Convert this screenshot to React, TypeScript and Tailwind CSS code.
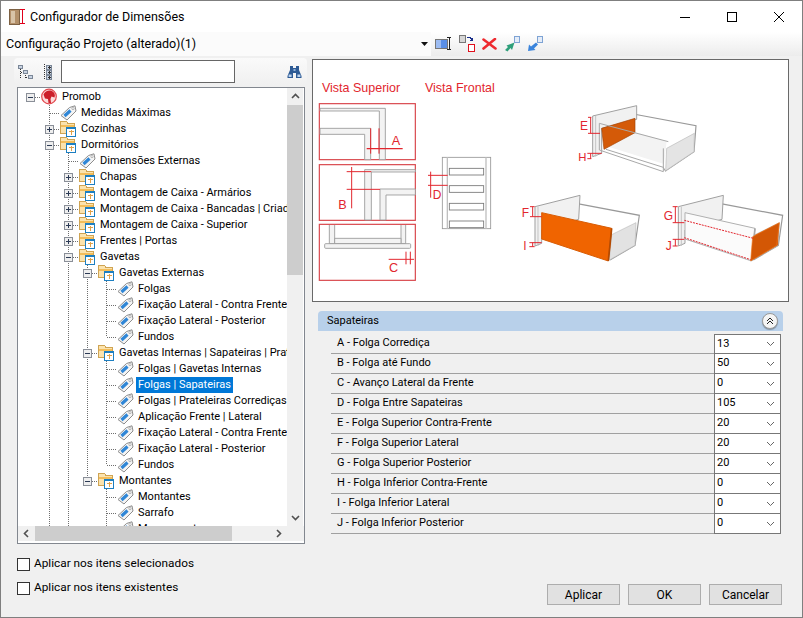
import { ReactNode } from "react";

type Kind = "minus" | "plus" | "leaf";
type Ico = "promob" | "tag" | "folder";
type TreeRow = { d: number; kind: Kind; icon: Ico; label: string; end?: boolean; selected?: boolean; noCol3?: boolean };

const TREE: TreeRow[] = [
  { d: 0, kind: "minus", icon: "promob", label: "Promob" },
  { d: 1, kind: "leaf", icon: "tag", label: "Medidas Máximas" },
  { d: 1, kind: "plus", icon: "folder", label: "Cozinhas" },
  { d: 1, kind: "minus", icon: "folder", label: "Dormitórios" },
  { d: 2, kind: "leaf", icon: "tag", label: "Dimensões Externas" },
  { d: 2, kind: "plus", icon: "folder", label: "Chapas" },
  { d: 2, kind: "plus", icon: "folder", label: "Montagem de Caixa - Armários" },
  { d: 2, kind: "plus", icon: "folder", label: "Montagem de Caixa - Bancadas | Criados" },
  { d: 2, kind: "plus", icon: "folder", label: "Montagem de Caixa - Superior" },
  { d: 2, kind: "plus", icon: "folder", label: "Frentes | Portas" },
  { d: 2, kind: "minus", icon: "folder", label: "Gavetas" },
  { d: 3, kind: "minus", icon: "folder", label: "Gavetas Externas" },
  { d: 4, kind: "leaf", icon: "tag", label: "Folgas" },
  { d: 4, kind: "leaf", icon: "tag", label: "Fixação Lateral - Contra Frente" },
  { d: 4, kind: "leaf", icon: "tag", label: "Fixação Lateral - Posterior" },
  { d: 4, kind: "leaf", icon: "tag", label: "Fundos", end: true },
  { d: 3, kind: "minus", icon: "folder", label: "Gavetas Internas | Sapateiras | Prateleiras Corrediças" },
  { d: 4, kind: "leaf", icon: "tag", label: "Folgas | Gavetas Internas" },
  { d: 4, kind: "leaf", icon: "tag", label: "Folgas | Sapateiras", selected: true },
  { d: 4, kind: "leaf", icon: "tag", label: "Folgas | Prateleiras Corrediças" },
  { d: 4, kind: "leaf", icon: "tag", label: "Aplicação Frente | Lateral" },
  { d: 4, kind: "leaf", icon: "tag", label: "Fixação Lateral - Contra Frente" },
  { d: 4, kind: "leaf", icon: "tag", label: "Fixação Lateral - Posterior" },
  { d: 4, kind: "leaf", icon: "tag", label: "Fundos", end: true },
  { d: 3, kind: "minus", icon: "folder", label: "Montantes", end: true },
  { d: 4, kind: "leaf", icon: "tag", label: "Montantes", noCol3: true },
  { d: 4, kind: "leaf", icon: "tag", label: "Sarrafo", noCol3: true },
  { d: 4, kind: "leaf", icon: "tag", label: "Mancamento", noCol3: true },
];

const PROPS = [
  ["A - Folga Corrediça", "13"],
  ["B - Folga até Fundo", "50"],
  ["C - Avanço Lateral da Frente", "0"],
  ["D - Folga Entre Sapateiras", "105"],
  ["E - Folga Superior Contra-Frente", "20"],
  ["F - Folga Superior Lateral", "20"],
  ["G - Folga Superior Posterior", "20"],
  ["H - Folga Inferior Contra-Frente", "0"],
  ["I - Folga Inferior Lateral", "0"],
  ["J - Folga Inferior Posterior", "0"],
];

const DOT = "#6f6f6f";

function Guide({ kind, line, first, end }: { kind?: Kind; line?: boolean; first?: boolean; end?: boolean }) {
  return (
    <svg width="19" height="16" className="shrink-0" shapeRendering="crispEdges">
      {line && <line x1="9.5" y1="0" x2="9.5" y2="16" stroke={DOT} strokeDasharray="1 1" />}
      {kind && !first && <line x1="9.5" y1="0" x2="9.5" y2={end ? 8 : 16} stroke={DOT} strokeDasharray="1 1" />}
      {kind && <line x1="10" y1="8.5" x2="19" y2="8.5" stroke={DOT} strokeDasharray="1 1" />}
      {kind && kind !== "leaf" && (
        <g>
          <rect x="5.5" y="4.5" width="8" height="8" fill="#eeeeee" stroke="#8a8f98" />
          <line x1="7" y1="8.5" x2="12" y2="8.5" stroke="#2b3a55" />
          {kind === "plus" && <line x1="9.5" y1="6" x2="9.5" y2="11" stroke="#2b3a55" />}
        </g>
      )}
    </svg>
  );
}

function RowIcon({ icon }: { icon: Ico }) {
  if (icon === "promob") {
    return (
      <svg width="20" height="18" className="shrink-0 -my-px overflow-visible">
        <circle cx="9" cy="8.5" r="7.3" fill="#fbdcdc" stroke="#e2484e" strokeWidth="1.2" />
        <path d="M3.5 6.5 C5 3 8.5 2 11.5 2.8 C14.5 4 15.5 7 14.5 9.5 L11.5 8.5 L10.5 11 L11 15 L8.5 15 L8 11 L5 10.5 Z" fill="#cc1f2a" />
      </svg>
    );
  }
  if (icon === "tag") {
    return (
      <svg width="20" height="16" className="shrink-0 overflow-visible">
        <path d="M2 10.5 L10.5 2.5 L16 0.8 L17 6 L8 15 Z" fill="#f4f4f4" stroke="#8d8d8d" strokeLinejoin="round" />
        <line x1="5.5" y1="11" x2="11.5" y2="5.5" stroke="#2f86d6" strokeWidth="3.2" />
        <circle cx="14" cy="3.6" r="1.1" fill="#fff" stroke="#999" strokeWidth="0.7" />
      </svg>
    );
  }
  return (
    <svg width="20" height="16" className="shrink-0 overflow-visible" shapeRendering="crispEdges">
      <path d="M1.5 0.5 H7.5 L9 2.5 H15.5 V12.5 H1.5 Z" fill="#fbe3ae" stroke="#cfa453" />
      <rect x="2" y="4" width="13" height="2" fill="#f3bd5a" />
      <rect x="7.5" y="6.5" width="9" height="9" fill="#fff" stroke="#1d7fc1" />
      <rect x="8" y="7" width="8" height="1" fill="#1d7fc1" />
      <path d="M10 10.5 H14.5 M12.5 9 V14" stroke="#e0a24a" />
    </svg>
  );
}

function Row({ row }: { row: TreeRow }) {
  const cols: ReactNode[] = [];
  for (let c = 0; c < row.d; c++) {
    const line = c === 1 || c === 2 || (c === 3 && !row.noCol3);
    cols.push(<Guide key={c} line={line} />);
  }
  return (
    <div className="flex h-4 shrink-0 items-center pl-[3px] whitespace-nowrap">
      {cols}
      <Guide kind={row.kind} first={row.d === 0} end={row.end} />
      <RowIcon icon={row.icon} />
      <span className={`h-4 px-[2px] leading-4 ${row.selected ? "bg-[#0078d7] text-white" : "text-black"}`}>{row.label}</span>
    </div>
  );
}

function TreeToolIcons() {
  return (
    <div className="flex items-center">
      <svg width="16" height="16" className="ml-[3px]" shapeRendering="crispEdges">
        <path d="M3.5 5 V15 M8.5 11 V15 M4 8.5 H6 M9 13.5 H11" stroke="#333" strokeDasharray="1 1" />
        <rect x="1.5" y="1.5" width="4" height="3" fill="#c9d3e2" stroke="#7b8797" />
        <rect x="6.5" y="6.5" width="4" height="3" fill="#c9d3e2" stroke="#7b8797" />
        <rect x="11.5" y="11.5" width="4" height="3" fill="#c9d3e2" stroke="#7b8797" />
      </svg>
      <svg width="12" height="16" className="ml-[10px]" shapeRendering="crispEdges">
        <line x1="1.5" y1="0" x2="1.5" y2="16" stroke="#333" strokeDasharray="1 1" />
        {[1, 6, 11].map((y) => (
          <g key={y}>
            <rect x="3.5" y={y + 0.5} width="5" height="4" fill="#c9d3e2" stroke="#7b8797" />
            <path d={`M4.5 ${y + 2.5} H8 M6 ${y + 1} V${y + 4}`} stroke="#333" />
          </g>
        ))}
      </svg>
    </div>
  );
}

function Binoculars() {
  return (
    <svg width="15" height="14" viewBox="0 0 15 14">
      <path d="M3 1 H6 V3 H9 V1 H12 V5 L14.5 11 V13 H9 V8 H6 V13 H0.5 V11 L3 5 Z" fill="#2d5a94" />
      <rect x="1.6" y="9.5" width="3" height="2.5" fill="#bcd3ee" />
      <rect x="10.4" y="9.5" width="3" height="2.5" fill="#bcd3ee" />
      <rect x="6.5" y="4" width="2" height="2" fill="#8fb0d8" />
    </svg>
  );
}

function ToolbarIcons() {
  return (
    <div className="flex items-center">
      <svg width="17" height="14" className="ml-[4px]" shapeRendering="crispEdges">
        <rect x="0.5" y="2.5" width="12" height="9" fill="#5a8fe8" stroke="#777" />
        <rect x="1" y="3" width="5" height="8" fill="#9dbcf2" />
        <path d="M12 0.5 H16 M14 1 V12 M12 12.5 H16" stroke="#222" fill="none" />
      </svg>
      <svg width="17" height="18" className="ml-[7px]" shapeRendering="crispEdges">
        <rect x="0.5" y="0.5" width="6" height="7" fill="#d6d6d6" stroke="#777" />
        <rect x="9.5" y="9.5" width="6" height="7" fill="#fff" stroke="#e0101c" />
        <path d="M8 2.5 H11 L13 4.5 M13 2.5 V5.5 H10.5" stroke="#1a2f8a" fill="none" />
      </svg>
      <svg width="15" height="12" className="ml-[6px]">
        <path d="M1.5 1.5 L13.5 10.5 M13 1 L1.5 10.5" stroke="#ee2a2f" strokeWidth="2.6" strokeLinecap="round" />
      </svg>
      <svg width="17" height="16" className="ml-[7px]">
        <path d="M1 14 L4 11 L2.5 9.5 L10.5 6.5 L8 14 L6.5 12 L3.5 15.5 Z" fill="#2e9f7a" />
        <rect x="10.5" y="0.5" width="5" height="6" fill="#e4ecf8" stroke="#7ea3d4" />
      </svg>
      <svg width="17" height="16" className="ml-[6px]">
        <path d="M1 15 L2 8.5 L4 10.5 L9 6.5 L11 8.5 L7 12.5 L8.5 14 Z" fill="#3a84dc" />
        <rect x="10.5" y="0.5" width="5" height="6" fill="#e4ecf8" stroke="#7ea3d4" />
      </svg>
    </div>
  );
}

function Chevron({ dir, className }: { dir: "up" | "down" | "left" | "right"; className?: string }) {
  const d = { up: "M1 6 L4.5 2.5 L8 6", down: "M1 3 L4.5 6.5 L8 3", left: "M6 1 L2.5 4.5 L6 8", right: "M3 1 L6.5 4.5 L3 8" }[dir];
  return (
    <svg width="9" height="9" className={className}>
      <path d={d} fill="none" stroke="#505050" strokeWidth="1.6" />
    </svg>
  );
}

const RED = "#e2262e";
const GR = "#999999";

function Shape({ d, fill = "#f3f3f3" }: { d: string; fill?: string }) {
  return <path d={d} fill={fill} stroke={GR} strokeWidth="2.6" />;
}

function RedLines({ d, w = 3 }: { d: string; w?: number }) {
  return <path d={d} fill="none" stroke={RED} strokeWidth={w} />;
}

function Drawer({ x, y, left, right, front, side }: { x: number; y: number; left: string; right: string; front: string; side: string }) {
  return (
    <g transform={`translate(${x} ${y})`}>
      <path d="M228 340 L418 376 L405 466 L330 510" fill="#fff" stroke="#999" strokeWidth="3.5" />
      <path d="M105 350 L240 316 L236 388 L125 420 L125 460 L105 468 Z" fill="#f1f1f1" stroke="#a0a0a0" strokeWidth="3" />
      <path d="M114 350 V468" stroke="#c4c4c4" strokeWidth="3" />
      <path d="M335 434 L408 398 L405 466 L328 510 Z" fill={side} stroke="#bbb" strokeWidth="2" />
      <path d="M125 368 L335 415 L325 513 L125 447 Z" fill={front} stroke={left} strokeWidth="3" />
      <path d="M335 415 L325 513" stroke={right} strokeWidth="5" />
    </g>
  );
}

function Drawing() {
  return (
    <svg viewBox="0 0 476 242" width="476" height="242" className="block" style={{ fontFamily: "'Liberation Sans', sans-serif" }}>
      <g transform="translate(-3 -5) scale(0.33333)">
        <text x="36" y="110" fontSize="37.5" fill={RED}>Vista Superior</text>
        <text x="345" y="110" fontSize="37.5" fill={RED}>Vista Frontal</text>

        <rect x="28" y="146" width="288" height="168" fill="#fff" stroke="#d8444a" strokeWidth="3.5" />
        <Shape d="M30 160 H226 V314 H208 V168 H30 Z" />
        <Shape d="M30 220 H182 V314 H164 V238 H30 Z" />
        <RedLines d="M182 220 V296 M207 220 V296" />
        <RedLines d="M170 281 H278" w={4} />
        <text x="245" y="271" fontSize="38" fill={RED}>A</text>

        <rect x="28" y="329" width="288" height="167" fill="#fff" stroke="#d8444a" strokeWidth="3.5" />
        <Shape d="M316 344 H164 V495 H184 V351 H316 Z" />
        <Shape d="M316 402 H210 V495 H228 V420 H316 Z" />
        <RedLines d="M125 336 V460 M110 350 H184 M110 403 H210" />
        <text x="85" y="461" fontSize="38" fill={RED}>B</text>

        <rect x="28" y="508" width="288" height="168" fill="#fff" stroke="#d8444a" strokeWidth="3.5" />
        <Shape d="M58 510 V566 H74 V510 M273 510 V566 H287 V510" />
        <Shape d="M74 550 H273 V566 H74 Z" />
        <rect x="44" y="566" width="258" height="14" rx="3" fill="#f3f3f3" stroke={GR} strokeWidth="2.6" />
        <RedLines d="M288 590 V628 M301 590 V628 M236 613 H312" />
        <text x="237" y="651" fontSize="38" fill={RED}>C</text>

        <rect x="397" y="307" width="145" height="214" fill="#fff" stroke={GR} strokeWidth="2.6" />
        <path d="M412 307 V521 M528 307 V521" stroke="#c0c0c0" strokeWidth="4" />
        {[340, 392, 445, 498].map((y) => (
          <rect key={y} x="418" y={y} width="103" height="20" fill="#fff" stroke="#777" strokeWidth="2.6" />
        ))}
        <RedLines d="M354 361 H413 M354 391 H413 M362 350 V428" />
        <text x="368" y="431" fontSize="36" fill={RED}>D</text>
      </g>

      <g transform="translate(187 30) scale(0.33333)">
        {/* gaveta E / H */}
        <path d="M400 72 L588 107 L582 185 L497 242" fill="#fff" stroke="#999" strokeWidth="3.5" />
        <path d="M278 78 L410 47 L410 88 L305 115 L305 190 L278 200 Z" fill="#f1f1f1" stroke="#a0a0a0" strokeWidth="3" />
        <path d="M287 78 V200" stroke="#c4c4c4" strokeWidth="3" />
        <path d="M500 175 L583 130 L582 185 L497 242 Z" fill="#e4e4e4" stroke="#bbb" strokeWidth="2" />
        <path d="M318 168 L405 126 L500 154 L492 222 Z" fill="#f3f3f3" />
        <path d="M305 115 L405 85 L405 128 L312 178 Z" fill="#d45a08" stroke="#a34406" strokeWidth="2" />
        <path d="M298 100 L505 155 M318 178 L490 232 L497 245 M298 100 V180 L490 245 M490 175 V245" fill="none" stroke="#a8a8a8" strokeWidth="3" />
        <RedLines d="M264 82 H274 M264 130 H300 M272 82 V130 M262 190 H305 M262 206 H274 M272 190 V206" />
        <text x="240" y="120" fontSize="36" fill={RED}>E</text>
        <text x="235" y="214" fontSize="34" fill={RED}>H</text>

        {/* gaveta F / I */}
        <Drawer x={0} y={0} left="#d85c05" right="#b34a02" front="#f06400" side="#e2e2e2" />
        <RedLines d="M90 350 H104 M90 380 H125 M98 350 V380 M88 458 H125 M88 470 H104 M98 458 V470" />
        <text x="65" y="381" fontSize="36" fill={RED}>F</text>
        <text x="70" y="480" fontSize="36" fill={RED}>I</text>

        {/* gaveta G / J */}
        <Drawer x={430} y={0} left="#b0b0b0" right="#a8a8a8" front="#fbfbfb" side="#d35705" />
        <path d="M758 440 L838 398 L830 466 L752 513 Z" fill="#d35705" stroke="#f0741a" strokeWidth="2" />
        <path d="M553 391 L760 445 M553 443 L752 509" fill="none" stroke={RED} strokeWidth="3" strokeDasharray="6 3" />
        <RedLines d="M518 350 H533 M518 398 H553 M526 350 V398 M518 448 H553 M518 468 H533 M526 448 V468" />
        <text x="491" y="391" fontSize="36" fill={RED}>G</text>
        <text x="497" y="480" fontSize="36" fill={RED}>J</text>
      </g>
    </svg>
  );
}

function Check({ label }: { label: string }) {
  return (
    <label className="flex h-[13px] items-center gap-[4px]">
      <span className="h-[13px] w-[13px] border border-[#333] bg-white" />
      <span className="-mt-px text-[11.8px] leading-none">{label}</span>
    </label>
  );
}

function Btn({ label }: { label: string }) {
  return (
    <button className="h-[21px] w-[73px] border border-[#adadad] bg-[#e1e1e1] text-xs leading-none text-black">{label}</button>
  );
}

export default function App() {
  return (
    <div className="flex h-[618px] w-[803px] flex-col overflow-hidden border border-[#7f7f7f] bg-[#f0f0f0] font-['Roboto',sans-serif] text-[11px] text-black">
      {/* title bar */}
      <div className="flex h-[31px] shrink-0 items-center bg-white">
        <svg width="17" height="16" className="ml-[8px]" shapeRendering="crispEdges">
          <rect x="0" y="0" width="10" height="15" fill="#b3906a" stroke="#7d6143" />
          <rect x="1.5" y="1.5" width="4" height="12" fill="#d9c4a8" />
          <path d="M11 0.5 H16 M13.5 1 V14 M11 14.5 H16" stroke="#e0001b" strokeWidth="1.2" />
        </svg>
        <span className="ml-[4px] pt-px text-[12.5px]">Configurador de Dimensões</span>
        <div className="ml-auto flex items-center">
          <svg width="12" height="12" className="mr-[35px]"><line x1="1" y1="6.5" x2="11" y2="6.5" stroke="#000" /></svg>
          <svg width="12" height="12" className="mr-[35px]" shapeRendering="crispEdges"><rect x="1.5" y="1.5" width="9" height="9" fill="none" stroke="#000" /></svg>
          <svg width="12" height="12" className="mr-[17px]"><path d="M1 1 L11 11 M11 1 L1 11" stroke="#000" /></svg>
        </div>
      </div>

      {/* toolbar */}
      <div className="flex h-[24px] shrink-0">
        <div className="flex w-[430px] items-center justify-between bg-[#fbfbfb] pl-[5px] pr-[3px]">
          <span className="text-[12.5px]">Configuração Projeto (alterado)(1)</span>
          <svg width="7" height="4"><path d="M0 0 H7 L3.5 4 Z" fill="#111" /></svg>
        </div>
        <div className="flex flex-1 items-center bg-gradient-to-b from-white to-[#ececec]">
          <ToolbarIcons />
        </div>
      </div>

      <div className="flex min-h-0 flex-1">
        {/* left */}
        <div className="flex w-[311px] shrink-0 flex-col pl-[13px] pt-[2px]">
          <div className="flex h-[27px] w-[293px] items-center rounded-sm bg-gradient-to-b from-[#fafafa] to-[#f0f0f0]">
            <TreeToolIcons />
            <div className="ml-[6px] h-[23px] w-[174px] border border-[#666] bg-white" />
            <div className="ml-[52px]"><Binoculars /></div>
          </div>
          <div className="mt-[2px] ml-[3px] flex h-[457px] w-[288px] flex-col border border-[#82878f] bg-white">
            <div className="flex min-h-0 flex-1">
              <div className="flex min-w-0 flex-1 flex-col overflow-hidden pt-px">
                {TREE.map((r, i) => (
                  <Row key={i} row={r} />
                ))}
              </div>
              <div className="mr-px flex w-[16px] shrink-0 flex-col bg-[#f0f0f0]">
                <div className="flex h-[17px] items-center justify-center"><Chevron dir="up" /></div>
                <div className="h-[170px] bg-[#cdcdcd]" />
                <div className="flex-1" />
                <div className="flex h-[17px] items-center justify-center"><Chevron dir="down" /></div>
              </div>
            </div>
            <div className="flex h-[15px] shrink-0 items-center bg-[#f0f0f0]">
              <div className="flex w-[17px] justify-center"><Chevron dir="left" /></div>
              <div className="h-full w-[197px] bg-[#cdcdcd]" />
              <div className="flex-1" />
              <div className="flex w-[17px] justify-center"><Chevron dir="right" /></div>
              <div className="w-[17px]" />
            </div>
            <div className="h-[2px] shrink-0 bg-white" />
          </div>
          <div className="mt-[14px] ml-[3px] flex flex-col gap-[11px]">
            <Check label="Aplicar nos itens selecionados" />
            <Check label="Aplicar nos itens existentes" />
          </div>
        </div>

        {/* right */}
        <div className="flex min-w-0 flex-1 flex-col pt-[3px]">
          <div className="h-[243px] w-[477px] border border-[#696969] bg-white">
            <Drawing />
          </div>
          <div className="mt-[9px] ml-[6px] flex h-[20px] w-[465px] items-center justify-between rounded-t-[4px] bg-[#b8d0ea] pl-[9px] pr-[5px]">
            <span>Sapateiras</span>
            <span className="flex h-[16px] w-[16px] items-center justify-center rounded-full border border-[#9a9a9a] bg-[#f4f4f4] shadow-[0_1px_1px_rgba(0,0,0,0.3)]">
              <svg width="8" height="8"><path d="M1 4 L4 1 L7 4 M1 7 L4 4 L7 7" fill="none" stroke="#222" /></svg>
            </span>
          </div>
          <div className="mt-[2px] ml-[19px] w-[450px] border-t border-transparent">
            {PROPS.map(([label, value], i) => (
              <div key={label} className="flex h-[20px]">
                <div className="flex flex-1 items-center border-b border-[#a0a0a0] pl-[6px]">{label}</div>
                <div className={`flex w-[67px] items-center justify-between border-x border-b border-[#777] bg-white pl-[2px] pr-[5px] ${i === 0 ? "border-t" : ""}`}>
                  <span>{value}</span>
                  <svg width="9" height="6"><path d="M1 1 L4.5 4.5 L8 1" fill="none" stroke="#666" /></svg>
                </div>
              </div>
            ))}
          </div>
          <div className="mt-[50px] ml-[235px] flex gap-[8px]">
            <Btn label="Aplicar" />
            <Btn label="OK" />
            <Btn label="Cancelar" />
          </div>
        </div>
      </div>
    </div>
  );
}
